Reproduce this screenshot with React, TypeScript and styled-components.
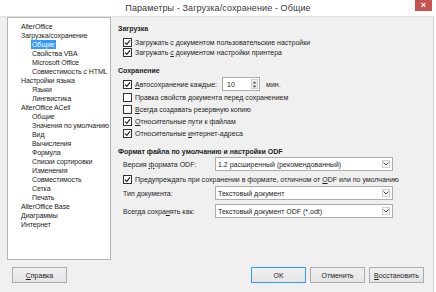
import { createGlobalStyle, styled } from 'styled-components';

const GlobalStyle = createGlobalStyle`
  html, body {
    margin: 0;
    padding: 0;
    background: #ffffff;
  }
  body {
    font-family: "Liberation Sans", Arial, sans-serif;
    color: #1e1e1e;
  }
`;

type TreeItem = { label: string; level: number; selected?: boolean };

const treeItems: TreeItem[] = [
  { label: 'AlterOffice', level: 1 },
  { label: 'Загрузка/сохранение', level: 1 },
  { label: 'Общие', level: 2, selected: true },
  { label: 'Свойства VBA', level: 2 },
  { label: 'Microsoft Office', level: 2 },
  { label: 'Совместимость с HTML', level: 2 },
  { label: 'Настройки языка', level: 1 },
  { label: 'Языки', level: 2 },
  { label: 'Лингвистика', level: 2 },
  { label: 'AlterOffice ACell', level: 1 },
  { label: 'Общие', level: 2 },
  { label: 'Значения по умолчанию', level: 2 },
  { label: 'Вид', level: 2 },
  { label: 'Вычисления', level: 2 },
  { label: 'Формула', level: 2 },
  { label: 'Списки сортировки', level: 2 },
  { label: 'Изменения', level: 2 },
  { label: 'Совместимость', level: 2 },
  { label: 'Сетка', level: 2 },
  { label: 'Печать', level: 2 },
  { label: 'AlterOffice Base', level: 1 },
  { label: 'Диаграммы', level: 1 },
  { label: 'Интернет', level: 1 },
];

function CheckBox({ checked }: { checked?: boolean }) {
  return (
    <S.Box>
      {checked && (
        <svg width="7" height="7" viewBox="0 0 7 7">
          <path d="M1 3.6 L2.8 5.4 L6 1.4" fill="none" stroke="#222" strokeWidth="1.2" />
        </svg>
      )}
    </S.Box>
  );
}

function Combo({ value }: { value: string }) {
  return (
    <S.Combo>
      <S.ComboText>{value}</S.ComboText>
      <S.ComboArrow>
        <svg width="6" height="4" viewBox="0 0 6 4">
          <path d="M0.5 0.5 L3 3 L5.5 0.5" fill="none" stroke="#444" strokeWidth="1" />
        </svg>
      </S.ComboArrow>
    </S.Combo>
  );
}

export default function App() {
  return (
    <>
      <GlobalStyle />
      <S.Window>
        <S.TitleBar>
          <S.Title>Параметры - Загрузка/сохранение - Общие</S.Title>
          <S.Close>×</S.Close>
        </S.TitleBar>
        <S.Body>
          <S.Main>
            <S.Tree>
              {treeItems.map((item, i) => (
                <S.TreeRow key={i} $level={item.level}>
                  <S.TreeLabel $selected={item.selected}>{item.label}</S.TreeLabel>
                </S.TreeRow>
              ))}
            </S.Tree>
            <S.Panel>
              <S.Header>Загрузка</S.Header>
              <S.Group $top={3}>
                <S.CheckRow>
                  <CheckBox checked />
                  <span>Загружать с документом пользовательские настройки</span>
                </S.CheckRow>
                <S.CheckRow>
                  <CheckBox checked />
                  <span>
                    Загружать <S.U>с</S.U> документом настройки принтера
                  </span>
                </S.CheckRow>
              </S.Group>

              <S.Header $top={9}>Сохранение</S.Header>
              <S.Group $top={1}>
                <S.CheckRow $height={14}>
                  <CheckBox checked />
                  <S.AutoLabel>
                    <S.U>А</S.U>втосохранение каждые:
                  </S.AutoLabel>
                  <S.Spin>
                    <S.SpinValue>10</S.SpinValue>
                    <S.SpinButtons>
                      <svg width="5" height="9" viewBox="0 0 5 9">
                        <path d="M0.5 3.5 L2.5 1.2 L4.5 3.5 Z" fill="#555" />
                        <path d="M0.5 5.5 L2.5 7.8 L4.5 5.5 Z" fill="#555" />
                      </svg>
                    </S.SpinButtons>
                  </S.Spin>
                  <S.Unit>мин.</S.Unit>
                </S.CheckRow>
                <S.CheckRow $height={12}>
                  <CheckBox />
                  <span>Правка свойств документа перед сохранением</span>
                </S.CheckRow>
                <S.CheckRow $height={12}>
                  <CheckBox />
                  <span>
                    <S.U>В</S.U>сегда создавать резервную копию
                  </span>
                </S.CheckRow>
                <S.CheckRow $height={12}>
                  <CheckBox checked />
                  <span>
                    <S.U>О</S.U>тносительные пути к файлам
                  </span>
                </S.CheckRow>
                <S.CheckRow $height={12}>
                  <CheckBox checked />
                  <span>
                    Относительные <S.U>и</S.U>нтернет-адреса
                  </span>
                </S.CheckRow>
              </S.Group>

              <S.Header $top={8}>Формат файла по умолчанию и настройки ODF</S.Header>
              <S.Group>
                <S.FieldRow>
                  <S.FieldLabel>
                    Версия <S.U>ф</S.U>ормата ODF:
                  </S.FieldLabel>
                  <Combo value="1.2 расширенный (рекомендованный)" />
                </S.FieldRow>
                <S.CheckRow $height={12} $top={2}>
                  <CheckBox checked />
                  <span>
                    Предупреждать при сохранении в формате, отличном от <S.U>O</S.U>DF или по умолчанию
                  </span>
                </S.CheckRow>
                <S.FieldRow $top={1}>
                  <S.FieldLabel>
                    Тип <S.U>д</S.U>окумента:
                  </S.FieldLabel>
                  <Combo value="Текстовый документ" />
                </S.FieldRow>
                <S.FieldRow $top={4}>
                  <S.FieldLabel>
                    Всегда сохра<S.U>н</S.U>ять как:
                  </S.FieldLabel>
                  <Combo value="Текстовый документ ODF (*.odt)" />
                </S.FieldRow>
              </S.Group>
            </S.Panel>
          </S.Main>
          <S.Buttons>
            <S.Button>
              <S.U>С</S.U>правка
            </S.Button>
            <S.Spacer />
            <S.Button $default>OK</S.Button>
            <S.Button>Отменить</S.Button>
            <S.Button>
              <S.U>В</S.U>осстановить
            </S.Button>
          </S.Buttons>
        </S.Body>
      </S.Window>
    </>
  );
}

const S = {
  Window: styled.div`
    width: 436px;
    height: 292px;
    display: flex;
    flex-direction: column;
    background: #ffffff;
    overflow: hidden;
  `,
  TitleBar: styled.div`
    height: 16px;
    display: flex;
    align-items: center;
    justify-content: center;
    position: relative;
    background: #ffffff;
  `,
  Title: styled.div`
    font-size: 9px;
    color: #3a3a3a;
    letter-spacing: 0.1px;
  `,
  Close: styled.div`
    position: absolute;
    top: 0;
    right: 4px;
    width: 17px;
    height: 11px;
    background: #c75050;
    color: #ffffff;
    font-size: 9px;
    line-height: 10px;
    text-align: center;
    font-weight: bold;
  `,
  Body: styled.div`
    flex: 1;
    display: flex;
    flex-direction: column;
    background: #f0f0f0;
    border-top: 1px solid #e2e2e2;
    border-right: 1px solid #d6d6d6;
    margin-right: 2px;
  `,
  Main: styled.div`
    display: flex;
    height: 250px;
  `,
  Tree: styled.div`
    margin: 0 0 0 7px;
    width: 102px;
    height: 237px;
    border: 1px solid #b4b4b4;
    background: #ffffff;
    padding-top: 4px;
    box-sizing: content-box;
    overflow: hidden;
  `,
  TreeRow: styled.div<{ $level: number }>`
    height: 9px;
    line-height: 9px;
    padding-left: ${(p) => (p.$level === 1 ? 13 : 24)}px;
    font-size: 7px;
    letter-spacing: -0.1px;
    white-space: nowrap;
  `,
  TreeLabel: styled.span<{ $selected?: boolean }>`
    display: inline-block;
    padding: 0 1px;
    margin-left: -1px;
    background: ${(p) => (p.$selected ? '#3399ff' : 'transparent')};
    color: ${(p) => (p.$selected ? '#ffffff' : '#1e1e1e')};
  `,
  Panel: styled.div`
    flex: 1;
    padding: 7px 0 0 7px;
    display: flex;
    flex-direction: column;
    font-size: 7px;
  `,
  Header: styled.div<{ $top?: number }>`
    margin-top: ${(p) => p.$top ?? 0}px;
    height: 10px;
    line-height: 10px;
    font-weight: bold;
    font-size: 7px;
  `,
  Group: styled.div<{ $top?: number }>`
    margin-top: ${(p) => p.$top ?? 0}px;
    padding-left: 5px;
    display: flex;
    flex-direction: column;
  `,
  CheckRow: styled.div<{ $height?: number; $top?: number }>`
    margin-top: ${(p) => p.$top ?? 0}px;
    height: ${(p) => p.$height ?? 10}px;
    display: flex;
    align-items: center;
    gap: 3px;
    white-space: nowrap;
  `,
  Box: styled.div`
    width: 7px;
    height: 7px;
    border: 1px solid #333333;
    background: #ffffff;
    display: flex;
    align-items: center;
    justify-content: center;
    flex-shrink: 0;
  `,
  U: styled.span`
    text-decoration: underline;
  `,
  AutoLabel: styled.span`
    flex-shrink: 0;
    margin-right: 2px;
  `,
  Spin: styled.div`
    width: 36px;
    height: 12px;
    border: 1px solid #acacac;
    background: #ffffff;
    display: flex;
    align-items: center;
    justify-content: space-between;
  `,
  SpinValue: styled.span`
    padding-left: 4px;
    font-size: 7px;
  `,
  SpinButtons: styled.div`
    width: 7px;
    height: 10px;
    margin-right: 1px;
    border: 1px solid #cfcfcf;
    background: #f2f2f2;
    display: flex;
    align-items: center;
    justify-content: center;
    box-sizing: border-box;
  `,
  Unit: styled.span`
    margin-left: 3px;
  `,
  FieldRow: styled.div<{ $top?: number }>`
    margin-top: ${(p) => p.$top ?? 0}px;
    height: 14px;
    display: flex;
    align-items: center;
  `,
  FieldLabel: styled.span`
    width: 92px;
    white-space: nowrap;
  `,
  Combo: styled.div`
    width: 176px;
    height: 12px;
    border: 1px solid #acacac;
    background: #ffffff;
    display: flex;
    align-items: center;
    justify-content: space-between;
  `,
  ComboText: styled.span`
    padding-left: 2px;
    font-size: 7px;
    white-space: nowrap;
  `,
  ComboArrow: styled.div`
    width: 8px;
    height: 8px;
    margin-right: 2px;
    border: 1px solid #d0d0d0;
    background: #f6f6f6;
    display: flex;
    align-items: center;
    justify-content: center;
    box-sizing: border-box;
  `,
  Buttons: styled.div`
    display: flex;
    align-items: center;
    gap: 4px;
    padding: 0 9px 0 12px;
  `,
  Spacer: styled.div`
    flex: 1;
  `,
  Button: styled.button<{ $default?: boolean }>`
    width: 55px;
    height: 16px;
    padding: 0;
    border: 1px solid ${(p) => (p.$default ? '#3399ff' : '#acacac')};
    background: linear-gradient(#f0f0f0, #e5e5e5);
    font-family: "Liberation Sans", Arial, sans-serif;
    font-size: 7px;
    color: #1e1e1e;
  `,
};
